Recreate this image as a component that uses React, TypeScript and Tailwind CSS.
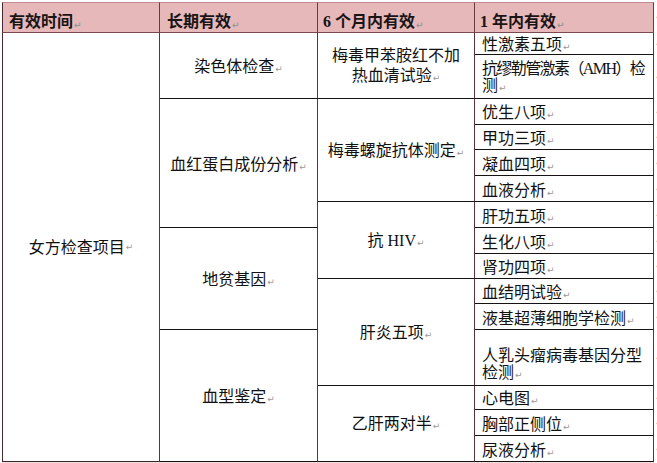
import type { FC, ReactNode } from "react";

const Mark: FC = () => (
  <span className="ml-[1px] font-['DejaVu_Sans'] text-[9px] leading-none tracking-normal text-[#9a9a9a]">↵</span>
);

interface Cell {
  lines: string[];
  cls: string;
  tight?: boolean;
}

const col2: Cell[] = [
  { lines: ["染色体检查"], cls: "row-start-2 row-span-2" },
  { lines: ["血红蛋白成份分析"], cls: "row-start-4 row-span-5" },
  { lines: ["地贫基因"], cls: "row-start-9 row-span-4" },
  { lines: ["血型鉴定"], cls: "row-start-13 row-span-4" },
];

const col3: Cell[] = [
  { lines: ["梅毒甲苯胺红不加", "热血清试验"], cls: "row-start-2 row-span-2" },
  { lines: ["梅毒螺旋抗体测定"], cls: "row-start-4 row-span-4" },
  { lines: ["抗 HIV"], cls: "row-start-8 row-span-3" },
  { lines: ["肝炎五项"], cls: "row-start-11 row-span-3" },
  { lines: ["乙肝两对半"], cls: "row-start-14 row-span-3" },
];

const col4: Cell[] = [
  { lines: ["性激素五项"], cls: "row-start-2 pt-[2px]" },
  { lines: ["抗缪勒管激素（AMH）检", "测"], cls: "row-start-3 pt-[1px]", tight: true },
  { lines: ["优生八项"], cls: "row-start-4 pt-[2px]" },
  { lines: ["甲功三项"], cls: "row-start-5 pt-[3px]" },
  { lines: ["凝血四项"], cls: "row-start-6 pt-[3px]" },
  { lines: ["血液分析"], cls: "row-start-7 pt-[3px]" },
  { lines: ["肝功五项"], cls: "row-start-8 pt-[3px]" },
  { lines: ["生化八项"], cls: "row-start-9 pt-[3px]" },
  { lines: ["肾功四项"], cls: "row-start-10 pt-[3px]" },
  { lines: ["血结明试验"], cls: "row-start-11 pt-[3px]" },
  { lines: ["液基超薄细胞学检测"], cls: "row-start-12 pt-[3px]" },
  { lines: ["人乳头瘤病毒基因分型", "检测"], cls: "row-start-13 pt-[12px]" },
  { lines: ["心电图"], cls: "row-start-14 pt-[2px]" },
  { lines: ["胸部正侧位"], cls: "row-start-15 pt-[3px]" },
  { lines: ["尿液分析"], cls: "row-start-16 pt-[3px]" },
];

const rightMarks = [
  "row-start-1",
  "row-start-2",
  "row-start-3",
  "row-start-4",
  "row-start-5",
  "row-start-6",
  "row-start-7",
  "row-start-8",
  "row-start-9",
  "row-start-10",
  "row-start-11",
  "row-start-12",
  "row-start-13",
  "row-start-14",
  "row-start-15",
  "row-start-16",
];

const Lines: FC<{ lines: string[]; tight?: boolean }> = ({ lines, tight }) => (
  <>
    {lines.map((line, i) => (
      <span
        key={i}
        className={`whitespace-nowrap ${tight && i === 0 ? "tracking-[-1.6px]" : ""}`}
      >
        {line}
        {i === lines.length - 1 && <Mark />}
      </span>
    ))}
  </>
);

const Head: FC<{ children: ReactNode; cls: string }> = ({ children, cls }) => (
  <div
    className={`row-start-1 flex items-end border-t border-r border-b border-t-[#c48a92] border-r-[#6a3a42] border-b-[#7a4a50] bg-[#e6b8b9] pb-[2px] text-[16px] font-bold leading-[17px] text-[#1a1414] ${cls}`}
  >
    {children}
    <Mark />
  </div>
);

export default function App() {
  return (
    <div className="h-[463px] w-[657px] overflow-hidden bg-white font-['Liberation_Serif','Noto_Sans_CJK_SC',serif] text-[#111]">
      <div className="ml-[2px] mt-[2px] grid grid-cols-[158px_158px_157px_179px_6px] grid-rows-[31px_22px_44px_26px_25px_26px_26px_26px_26px_25px_25px_26px_56px_24px_26px_26px]">
        <Head cls="col-start-1 border-l border-l-[#4a2a30] pl-[6px]">有效时间</Head>
        <Head cls="col-start-2 pl-[7px]">长期有效</Head>
        <Head cls="col-start-3 pl-[5px]">6 个月内有效</Head>
        <Head cls="col-start-4 pl-[5px]">1 年内有效</Head>

        <div className="col-start-1 row-start-2 row-span-15 flex items-center justify-center border-l border-r border-b border-l-[#4a2a30] border-r-[#5b3439] border-b-[#3a2828] text-[16px] leading-[17px]">
          女方检查项目
          <Mark />
        </div>

        {col2.map((c) => (
          <div
            key={c.lines[0]}
            className={`col-start-2 flex flex-col items-center justify-center border-r border-b border-r-[#5b3439] border-b-[#161212] pt-[2px] text-[16px] leading-[17px] ${c.cls}`}
          >
            <Lines lines={c.lines} />
          </div>
        ))}

        {col3.map((c) => (
          <div
            key={c.lines[0]}
            className={`col-start-3 flex flex-col items-center justify-center border-r border-b border-r-[#5b3439] border-b-[#161212] pt-[1px] text-[16px] leading-[20px] ${c.cls}`}
          >
            <Lines lines={c.lines} />
          </div>
        ))}

        {col4.map((c) => (
          <div
            key={c.lines[0]}
            className={`col-start-4 flex flex-col items-start justify-center overflow-hidden border-r border-b border-r-[#5b3439] border-b-[#161212] pl-[7px] text-[16px] leading-[17px] ${c.cls}`}
          >
            <Lines lines={c.lines} tight={c.tight} />
          </div>
        ))}

        {rightMarks.map((r) => (
          <div key={r} className={`col-start-5 flex items-center pl-[1px] ${r}`}>
            <Mark />
          </div>
        ))}
      </div>
      <div className="ml-[2px] h-[1px] w-[652px] bg-[#f2dcdc]" />
    </div>
  );
}
